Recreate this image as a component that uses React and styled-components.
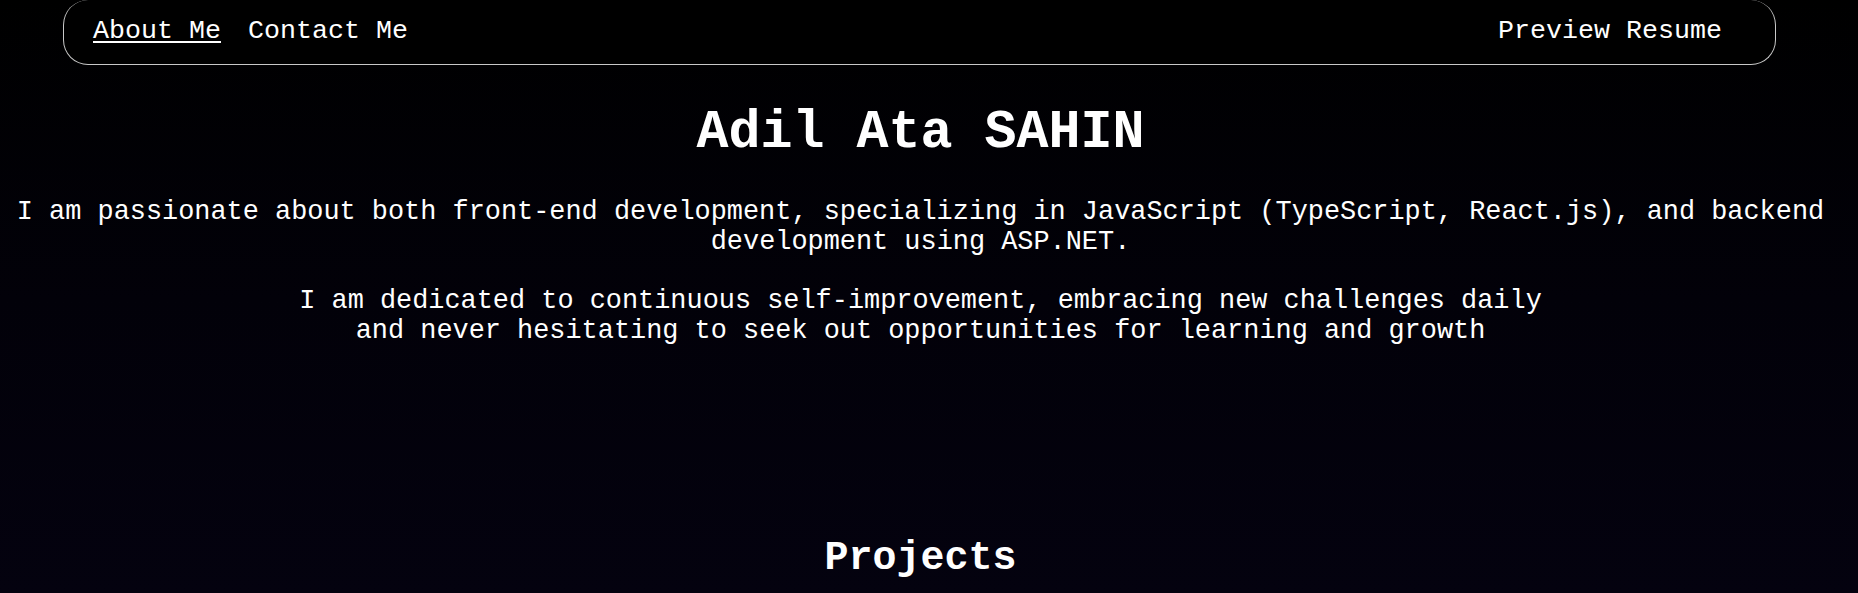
import React from "react";
import styled, { createGlobalStyle } from "styled-components";

const GlobalStyle = createGlobalStyle`
  html, body {
    margin: 0;
    padding: 0;
    background: #03020d;
  }
  body {
    font-family: "Courier New", Courier, "Nimbus Mono PS", "Nimbus Mono L", FreeMono, "Liberation Mono", monospace;
    color: #ffffff;
  }
`;

const Page = styled.div`
  min-height: 593px;
  box-sizing: border-box;
  padding: 0 25px 40px 8px;
  background: linear-gradient(180deg, #000000 0px, #020109 300px, #04020f 593px);
  display: flex;
  flex-direction: column;
`;

const Nav = styled.nav`
  margin: 0 57px 0 55px;
  height: 65px;
  box-sizing: border-box;
  border: 1px solid #c8c8c8;
  border-top: none;
  border-radius: 25px;
  padding: 0 53px 2px 29px;
  display: flex;
  align-items: center;
  justify-content: space-between;
  background: #000;
`;

const NavGroup = styled.div`
  display: flex;
  gap: 27px;
`;

const NavLink = styled.a`
  font-size: 26.67px;
  line-height: 30px;
  color: #fff;
  text-decoration: ${(p) => (p.$active ? "underline" : "none")};
  text-underline-offset: 3px;
  cursor: pointer;
`;

const Title = styled.h1`
  margin: 38px 0 0;
  font-size: 53.33px;
  line-height: 60px;
  font-weight: 700;
  text-align: center;
`;

const Para = styled.p`
  margin: ${(p) => p.$top}px 0 0;
  font-size: 26.9px;
  line-height: 30px;
  text-align: center;
`;

const SectionTitle = styled.h2`
  margin: 190px 0 0;
  font-size: 40px;
  line-height: 45px;
  font-weight: 700;
  text-align: center;
`;

export default function App() {
  return (
    <>
      <GlobalStyle />
      <Page>
        <Nav>
          <NavGroup>
            <NavLink $active>About Me</NavLink>
            <NavLink>Contact Me</NavLink>
          </NavGroup>
          <NavLink>Preview Resume</NavLink>
        </Nav>
        <Title>Adil Ata SAHIN</Title>
        <Para $top={34}>
          I am passionate about both front-end development, specializing in
          JavaScript (TypeScript, React.js), and backend development using
          ASP.NET.
        </Para>
        <Para $top={29}>
          I am dedicated to continuous self-improvement, embracing new
          challenges daily
          <br />
          and never hesitating to seek out opportunities for learning and
          growth
        </Para>
        <SectionTitle>Projects</SectionTitle>
      </Page>
    </>
  );
}
